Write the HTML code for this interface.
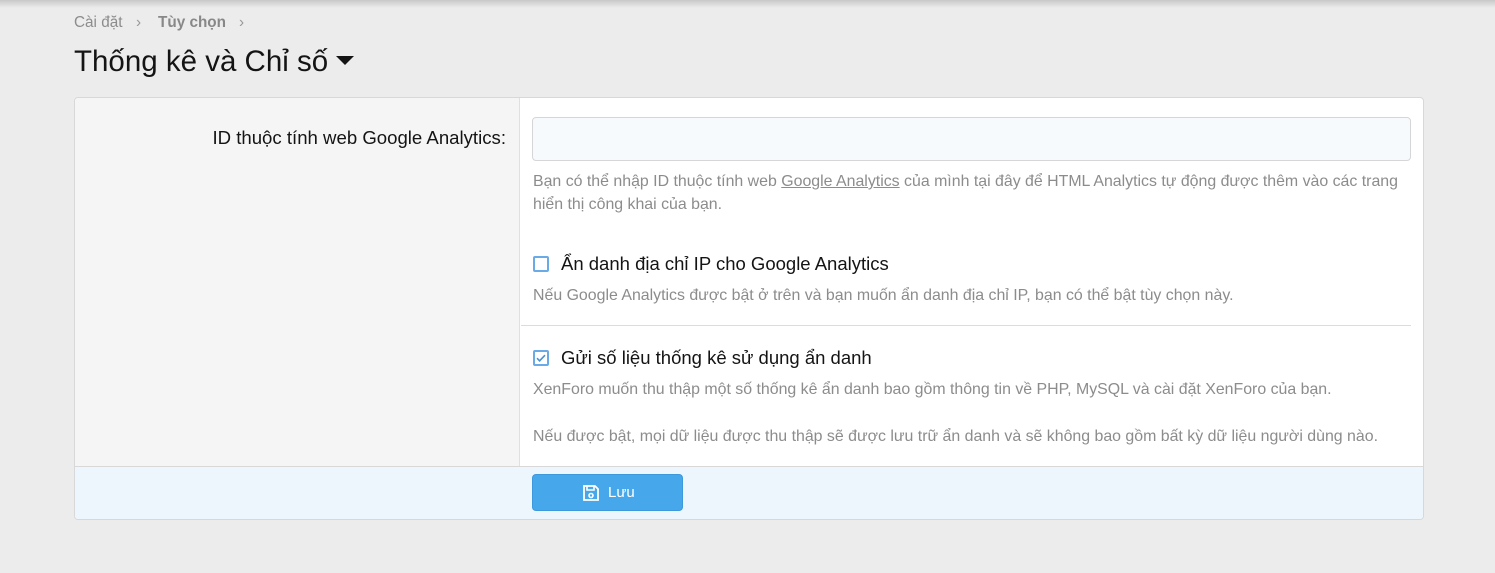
<!DOCTYPE html>
<html><head><meta charset="utf-8"><style>
*{box-sizing:border-box;margin:0;padding:0}
body{width:1495px;height:573px;background:#ececec;font-family:"Liberation Sans",sans-serif;position:relative;overflow:hidden;color:#141414}
.shadow{position:absolute;left:0;top:0;width:1495px;height:8px;background:linear-gradient(#c8c8c8,#ececec)}
.abs{position:absolute;white-space:nowrap}
.crumb{top:14px;font-size:15.3px;color:#8c8c8c}
.box{position:absolute;left:74px;top:97px;width:1350px;height:423px;background:#fff;border:1px solid #d8d8d8;border-radius:4px;overflow:hidden}
.left{position:absolute;left:0;top:0;width:445px;height:368px;background:#f5f5f5;border-right:1px solid #e0e0e0}
.foot{position:absolute;left:0;top:368px;width:100%;height:54px;background:#edf5fd;border-top:1px solid #d8d8d8}
.hint{font-size:15.9px;color:#8c8c8c}
.cb{position:absolute;width:16px;height:16px;border:2px solid #6aaae6;border-radius:2px;background:#fff}
.lbl{font-size:18.5px;color:#141414}
</style></head><body>
<div class="shadow"></div>
<div class="abs crumb" style="left:74px">Cài đặt</div>
<div class="abs crumb" style="left:136px;color:#999">›</div>
<div class="abs crumb" style="left:158px;font-weight:bold;color:#888">Tùy chọn</div>
<div class="abs crumb" style="left:239px;color:#999">›</div>
<div class="abs" style="left:74px;top:45px;font-size:29.5px;color:#141414">Thống kê và Chỉ số <span style="display:inline-block;width:0;height:0;border-left:9px solid transparent;border-right:9px solid transparent;border-top:9px solid #141414;vertical-align:middle;margin-left:0px;position:relative;top:-3px"></span></div>
<div class="box">
 <div class="left"></div>
 <div class="abs" style="right:917px;top:29px;font-size:18.6px">ID thuộc tính web Google Analytics:</div>
 <div style="position:absolute;left:457px;top:19px;width:879px;height:44px;background:#f7fafd;border:1px solid #d6d6d6;border-radius:4px"></div>
 <div class="abs hint" style="left:458px;top:72px;line-height:23px">Bạn có thể nhập ID thuộc tính web <u>Google Analytics</u> của mình tại đây để HTML Analytics tự động được thêm vào các trang<br>hiển thị công khai của bạn.</div>
 <div class="cb" style="left:458px;top:158px"></div>
 <div class="abs lbl" style="left:486px;top:155px">Ẩn danh địa chỉ IP cho Google Analytics</div>
 <div class="abs hint" style="left:458px;top:189px">Nếu Google Analytics được bật ở trên và bạn muốn ẩn danh địa chỉ IP, bạn có thể bật tùy chọn này.</div>
 <div style="position:absolute;left:446px;top:227px;width:890px;height:1px;background:#dcdcdc"></div>
 <div class="cb" style="left:458px;top:252px"><svg width="12" height="12" viewBox="0 0 12 12" style="position:absolute;left:0;top:0"><path d="M2 6.2l2.6 2.6L10 3.2" fill="none" stroke="#4a90d9" stroke-width="1.6"/></svg></div>
 <div class="abs lbl" style="left:486px;top:249px">Gửi số liệu thống kê sử dụng ẩn danh</div>
 <div class="abs hint" style="left:458px;top:283px">XenForo muốn thu thập một số thống kê ẩn danh bao gồm thông tin về PHP, MySQL và cài đặt XenForo của bạn.</div>
 <div class="abs hint" style="left:458px;top:330px">Nếu được bật, mọi dữ liệu được thu thập sẽ được lưu trữ ẩn danh và sẽ không bao gồm bất kỳ dữ liệu người dùng nào.</div>
 <div class="foot"></div>
 <div style="position:absolute;left:457px;top:376px;width:151px;height:37px;background:#47a7eb;border:1px solid #3d98dc;border-radius:4px;color:#fff;font-size:15px">
  <svg width="18" height="18" viewBox="0 0 18 18" style="position:absolute;left:49px;top:9px"><path d="M2 2h11l3 3v11H2z" fill="none" stroke="#fff" stroke-width="1.8"/><path d="M5 2v4h7V2" fill="none" stroke="#fff" stroke-width="1.6"/><circle cx="9" cy="11.5" r="2" fill="none" stroke="#fff" stroke-width="1.6"/></svg>
  <span style="position:absolute;left:75px;top:9px">Lưu</span>
 </div>
</div>
</body></html>
